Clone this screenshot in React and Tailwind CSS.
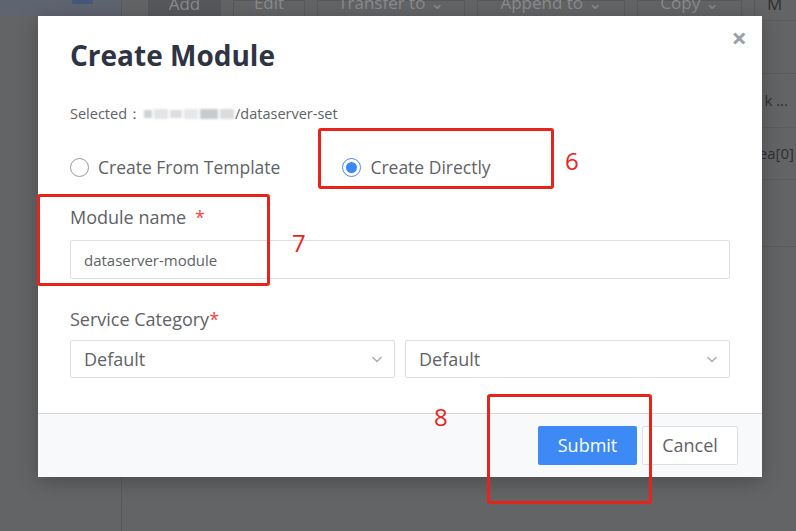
import React from 'react';

const font = { fontFamily: '"Open Sans", "Noto Sans", sans-serif' };

const Chevron = () => (
  <svg width="14" height="14" viewBox="0 0 14 14" className="text-[#a8abb2]">
    <path d="M2.5 5l4.5 4.5L11.5 5" fill="none" stroke="currentColor" strokeWidth="1.4" />
  </svg>
);

const Select = ({ value }) => (
  <div className="flex-1 h-[38px] border border-[#dcdfe6] rounded-[2px] flex items-center justify-between pl-[13px] pr-[10px] bg-white">
    <span className="text-[18px] text-[#606266]">{value}</span>
    <Chevron />
  </div>
);

const Radio = ({ checked, label }) => (
  <label className="flex items-center gap-[9px]">
    <span
      className={
        checked
          ? 'w-[19px] h-[19px] rounded-full border border-[#4a8cf6] flex items-center justify-center'
          : 'w-[19px] h-[19px] rounded-full border border-[#9a9ca3]'
      }
    >
      {checked && <span className="w-[11px] h-[11px] rounded-full bg-[#3d87f5]" />}
    </span>
    <span className="text-[17.5px] text-[#606266]">{label}</span>
  </label>
);

const Mark = ({ className }) => (
  <div className={'absolute border-[3px] border-[#e8231c] rounded-[3px] ' + className} />
);

const Num = ({ className, children }) => (
  <div className={'absolute text-[24px] leading-none text-[#e8231c] ' + className} style={font}>{children}</div>
);

export default function App() {
  return (
    <div className="relative w-[796px] h-[531px] overflow-hidden bg-[#636466]" style={font}>
      {/* dimmed page behind */}
      <div className="flex h-full">
        <div className="w-[122px] border-r border-[#58595b] shrink-0">
          <div className="h-[16px] bg-[#5e6470] relative">
            <div className="absolute left-[72px] top-0 w-[21px] h-[4px] bg-[#44587a] rounded-b-[2px]" />
          </div>
        </div>
        <div className="flex-1 flex flex-col">
          <div className="flex items-start h-[21px] border-b border-[#5a5b5d] pl-[26px] gap-[12px] text-[17px] text-[#8a8b8e]">
            <div className="w-[73px] h-[20px] pb-[8px] bg-[#57585b] flex items-end justify-center leading-none">Add</div>
            <div className="w-[72px] h-[20px] pb-[8px] border border-[#58595b] flex items-end justify-center leading-none">Edit</div>
            <div className="w-[148px] h-[20px] pb-[8px] border border-[#58595b] flex items-end justify-center leading-none">Transfer to ⌄</div>
            <div className="w-[148px] h-[20px] pb-[8px] border border-[#58595b] flex items-end justify-center leading-none">Append to ⌄</div>
            <div className="w-[105px] h-[20px] pb-[8px] border border-[#58595b] flex items-end justify-center leading-none">Copy ⌄</div>
            <div className="w-[40px] h-[20px] pb-[8px] border-l border-[#58595b] pl-[12px] flex items-end leading-none text-[#2e2f31]">M</div>
          </div>
          <div className="flex-1 flex flex-col text-[15px] text-[#2e2f31]">
            <div className="h-[53px] border-b border-[#5a5b5d]" />
            <div className="h-[54px] border-b border-[#5a5b5d] flex items-center justify-end pr-[8px]">k ...</div>
            <div className="h-[52px] border-b border-[#5a5b5d] flex items-center justify-end pr-[2px]">ea[0]</div>
            <div className="h-[67px] border-b border-[#5a5b5d]" />
          </div>
        </div>
      </div>

      {/* modal */}
      <div className="absolute left-[38px] top-[16px] w-[724px] h-[461px] bg-white shadow-[0_4px_18px_rgba(0,0,0,0.25)] flex flex-col">
        <div className="relative flex-1 px-[32px] pt-[19px]">
          <div className="absolute right-[15px] top-[8px] text-[27px] font-bold leading-none text-[#9ba0a8]">×</div>
          <h1 className="text-[28px] font-bold text-[#2f3445] leading-[40px]">Create Module</h1>
          <div className="mt-[29px] flex items-center text-[14.5px] text-[#606266] leading-[20px]">
            <span>Selected：</span>
            <span className="flex items-center h-[14px] ml-[2px] mr-[1px] gap-[2px] blur-[1px]">
              <span className="w-[8px] h-[8px] bg-[#cfd1d4]" />
              <span className="w-[14px] h-[10px] bg-[#e3e4e6]" />
              <span className="w-[12px] h-[8px] bg-[#dcdde0]" />
              <span className="w-[14px] h-[10px] bg-[#e6e7e9]" />
              <span className="w-[18px] h-[10px] bg-[#c9cacd]" />
              <span className="w-[14px] h-[10px] bg-[#dadbdd]" />
            </span>
            <span>/dataserver-set</span>
          </div>
          <div className="mt-[30px] flex items-center gap-[62px]">
            <Radio label="Create From Template" />
            <Radio checked label="Create Directly" />
          </div>
          <div className="mt-[25px] text-[18px] text-[#606266] leading-[24px]">
            Module name <span className="text-[#f04848] ml-[4px]">*</span>
          </div>
          <div className="mt-[11px] h-[39px] border border-[#dcdfe6] rounded-[2px] flex items-center px-[13px] text-[15px] text-[#606266]">
            dataserver-module
          </div>
          <div className="mt-[28px] text-[18px] text-[#606266] leading-[24px]">
            Service Category<span className="text-[#f04848]">*</span>
          </div>
          <div className="mt-[9px] flex gap-[10px]">
            <Select value="Default" />
            <Select value="Default" />
          </div>
        </div>
        <div className="h-[64px] border-t border-[#d4d6da] bg-[#f8f9fb] flex items-center justify-end gap-[5px] pr-[24px]">
          <button className="w-[99px] h-[39px] rounded-[2px] bg-[#3d8af7] text-white text-[18px]">Submit</button>
          <button className="w-[96px] h-[39px] rounded-[2px] bg-white border border-[#dcdfe6] text-[#606266] text-[18px]">Cancel</button>
        </div>
      </div>

      {/* annotations */}
      <Mark className="left-[318px] top-[128px] w-[236px] h-[61px]" />
      <Num className="left-[565px] top-[149px]">6</Num>
      <Mark className="left-[37px] top-[194px] w-[233px] h-[92px]" />
      <Num className="left-[292px] top-[231px]">7</Num>
      <Mark className="left-[487px] top-[394px] w-[165px] h-[110px]" />
      <Num className="left-[434px] top-[405px]">8</Num>
    </div>
  );
}
